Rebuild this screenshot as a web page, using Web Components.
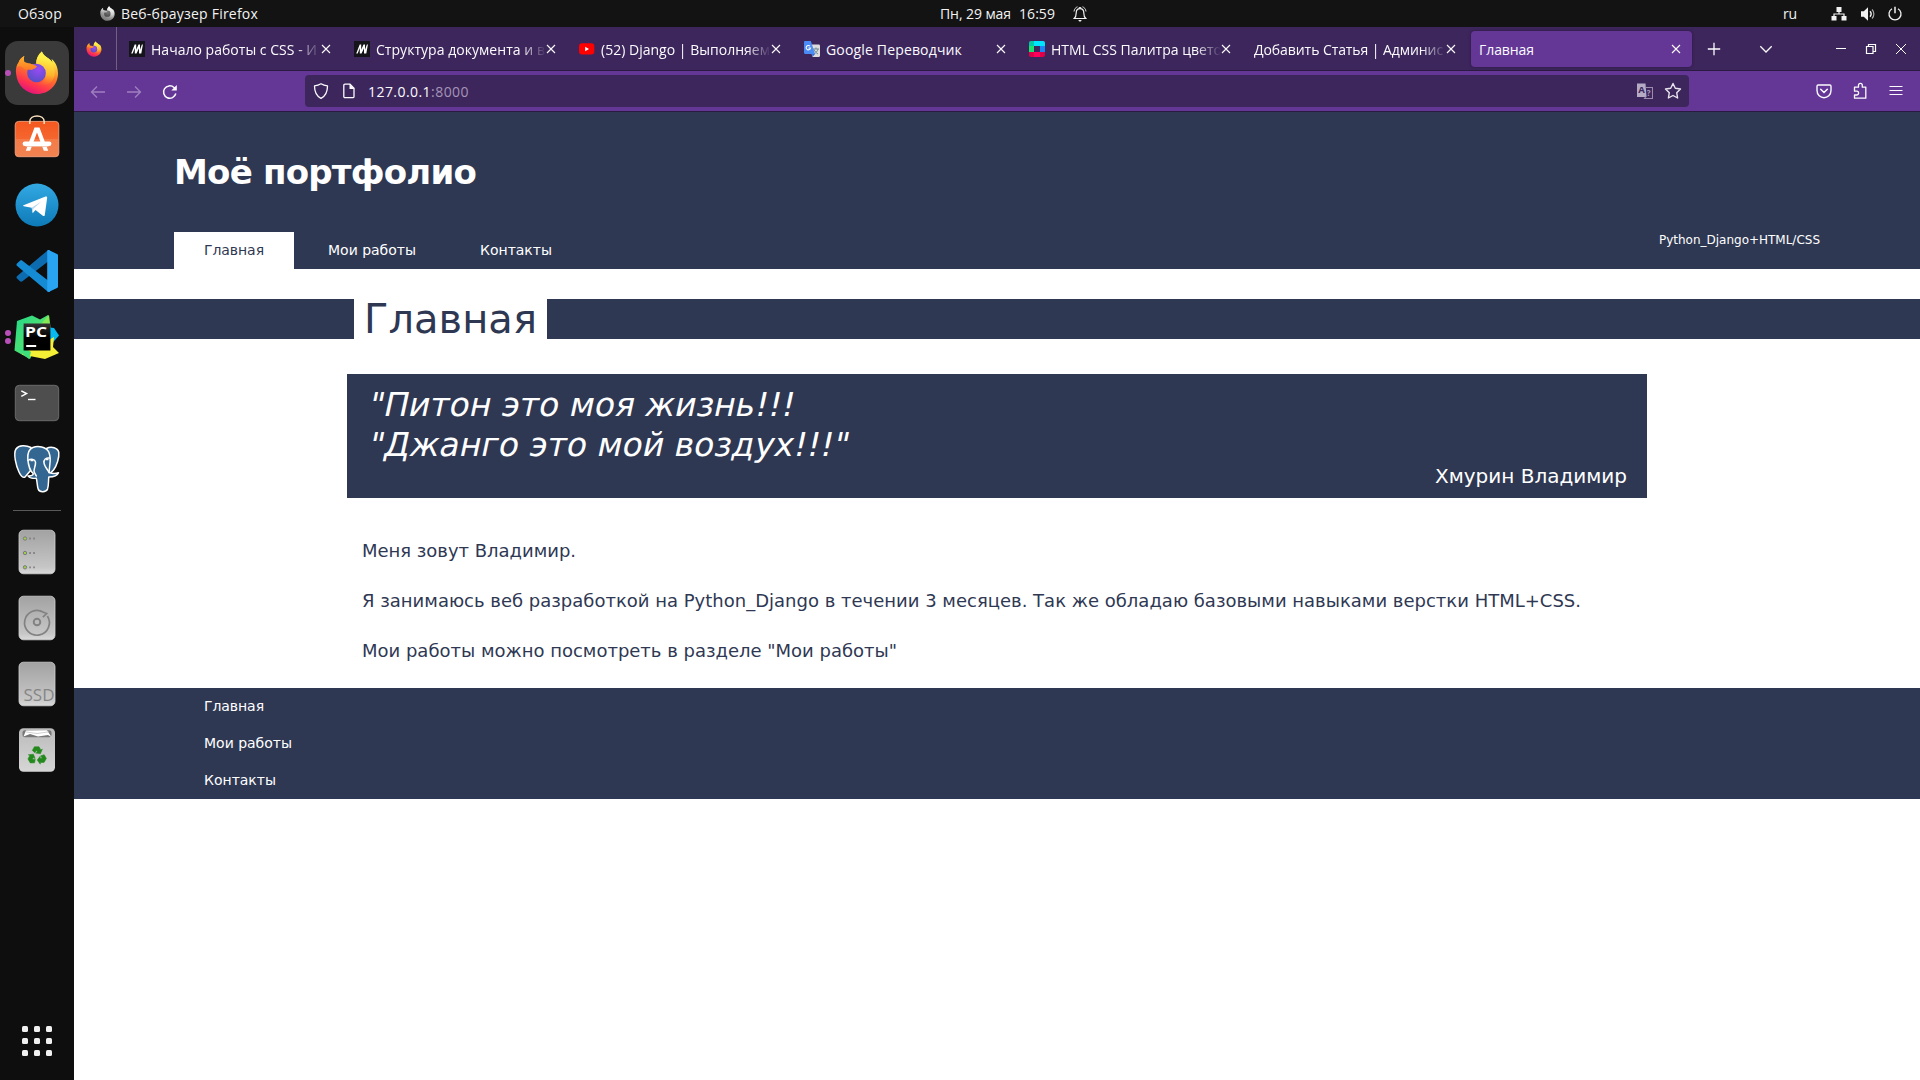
<!DOCTYPE html>
<html lang="ru">
<head>
<meta charset="utf-8">
<title>Главная</title>
<style>
html,body{margin:0;height:100%;background:#fff;overflow:hidden}
</style>
</head>
<body>
<desktop-shell></desktop-shell>

<script>
const define = (name, html, setup) => {
  const t = document.createElement('template');
  t.innerHTML = html;
  customElements.define(name, class extends HTMLElement {
    constructor() {
      super();
      this.attachShadow({mode: 'open'}).append(t.content.cloneNode(true));
    }
    connectedCallback() { if (setup) setup(this, this.shadowRoot); }
  });
};

const FLAME = `
<path d="M41.8 11.5c-4 3.5-5.8 8-5.6 12.3l-8 1-4.200-3c-.5-2-.4-3.800.3-5.800-3 1.300-4.600 3.700-5.600 6.200C15.800 26 15.500 30 16.200 34.500 17.500 46 26.500 54 37.300 54 49 54 58 44.800 58 33.500c0-6.500-2.700-12-6.500-14.500.5 1.500.8 2.500.8 3.500-2-4.500-8.500-5.500-10.500-11z" fill="url(#fa)"/>
<path d="M41.800 11.500c-4 3.500-5.900 8-5.600 12.500 5 1 9.300 5.500 9.300 11 0 5-4 9.500-9.500 9.500 8 4 17-1 18.500-9 .8-5-.2-10-2.200-13-2-4.500-8.500-5.500-10.500-11z" fill="url(#fb)"/>
<circle cx="36.500" cy="33" r="9.300" fill="url(#fc)"/>
<path d="M24.300 16c-3 1.300-4.600 3.700-5.600 6.200-1.200 1.600-1.800 3.300-2.100 5.300 3.400-2.500 5-.5 7.900 1.500 2 1.300 4.500.7 7 .9 2-.7 5-1.500 5.500-3.600-1.500-1.300-5-1.300-6.500-2.800-2 0-4.500-.5-6.200-1.700-.5-2-.5-3.800 0-5.800z" fill="url(#fd)"/>`;
const flameDefs = (c) => `<defs>
<linearGradient id="fa" x1=".8" y1="0" x2=".35" y2="1"><stop offset=".15" stop-color="${c[0]}"/><stop offset=".5" stop-color="${c[1]}"/><stop offset=".8" stop-color="${c[2]}"/><stop offset="1" stop-color="${c[3]}"/></linearGradient>
<linearGradient id="fb" x1=".5" y1="0" x2=".4" y2="1"><stop offset=".2" stop-color="${c[0]}"/><stop offset=".65" stop-color="${c[4]}"/><stop offset="1" stop-color="${c[1]}" stop-opacity="0"/></linearGradient>
<radialGradient id="fc" cx=".6" cy=".3" r=".8"><stop offset="0" stop-color="${c[5]}"/><stop offset="1" stop-color="${c[6]}"/></radialGradient>
<linearGradient id="fd" x1=".3" y1="0" x2=".3" y2="1"><stop offset="0" stop-color="${c[4]}"/><stop offset="1" stop-color="${c[1]}"/></linearGradient></defs>`;
const FLAME_COLOR = flameDefs(['#fff04a','#ff7a26','#ff3350','#e0147d','#ffb52c','#9a4af5','#4f4fc0']) + FLAME;
const FLAME_GREY = flameDefs(['#f4f4f4','#b0b0b0','#8a8a8a','#777','#d0d0d0','#777','#444']) + FLAME;

const DISK = `<defs><linearGradient id="g" x1="0" y1="0" x2="0" y2="1"><stop offset="0" stop-color="#a2a2a2"/><stop offset=".85" stop-color="#c6c6c6"/><stop offset="1" stop-color="#dadada"/></linearGradient></defs><rect x="19" y="11.200" width="36" height="43.600" rx="4.500" fill="url(#g)" stroke="#d0d0d0" stroke-width=".8"/>`;
const RECYCLE = `<path d="m32.300 34.400 2.100-3.700h4.600l1.900 3.200 1.500-.8-2 4.700-4.700-.7 1.700-1-1-1.700-1.500 2.400z"/>`;

const S = (w, h, vb, body) => `<svg width="${w}" height="${h}" viewBox="${vb}" fill="none">${body}</svg>`;
const D = (body) => S(74, 66, '0 0 74 66', body);
const ICONS = {
  'dock-firefox': D(FLAME_COLOR),
  'firefox': S(16, 16, '15 10 44 45', FLAME_COLOR),
  'firefox-grey': S(15, 17, '15 10 44 45', FLAME_GREY),
  'dock-software': D(`<defs><linearGradient id="o" x1="0" y1="0" x2="0" y2="1"><stop offset="0" stop-color="#f4581f"/><stop offset=".5" stop-color="#f5662f"/><stop offset=".51" stop-color="#f47b48"/><stop offset="1" stop-color="#f08352"/></linearGradient></defs>
    <rect x="15.200" y="15.400" width="43.600" height="35.300" rx="3.500" fill="url(#o)" stroke="#f5a37c" stroke-width=".9"/>
    <path d="M29.800 18v-2.200c0-7.700 14.400-7.700 14.400 0V18" stroke="#fbe3c0" stroke-width="1.500"/>
    <path d="M34.500 21.500h5l8.700 23.200h-4.400L37 26.500l-6.800 18.200h-4.400z" fill="#fff"/><path d="M24.800 37.800h24.400" stroke="#fff" stroke-width="4.400" stroke-linecap="round"/><path d="M25.500 40.500h23" stroke="#f3c2aa" stroke-width=".8"/>`),
  'dock-telegram': D(`<defs><linearGradient id="t" x1="0" y1="0" x2="0" y2="1"><stop offset="0" stop-color="#33a9e2"/><stop offset="1" stop-color="#0d7ab8"/></linearGradient></defs><circle cx="37" cy="33" r="21.500" fill="url(#t)"/><path d="M23.500 33.300 45.500 24.600c1.200-.4 1.900.2 1.600 1.700l-2.300 16.600c-.2 1.200-1 1.500-2 .9L35.500 38l-2.800 3.300-1-5.600-7.900-1.400c-.8-.3-.9-.7-.3-1z" fill="#fff"/><path d="m31.700 35.700 10-6.500-8.300 7.600-.7 4.500z" fill="#b8d9ee"/>`),
  'dock-code': D(`<path d="M17 40.600 20 43.300c.8.6 1.600.6 2.400 0L50 22v-9.700c-1.200-.4-2.200-.2-3 .6L17.200 38.100c-.9.800-.9 1.700-.2 2.500z" fill="#0d6bb0"/><path d="M17 25.400 20 22.700c.8-.6 1.600-.6 2.400 0L50 44v9.700c-1.200.4-2.200.2-3-.6L17.200 27.900c-.9-.8-.9-1.700-.2-2.500z" fill="#158bd4"/><path d="M47.200 12.700c.5-.7 1.200-.8 2-.4L57 16c.7.3 1 .8 1 1.500v31c0 .7-.3 1.200-1 1.500l-7.800 3.700c-.8.4-1.500.2-2-.4z" fill="#29a4f2"/>`),
  'dock-pycharm': D(`<defs><linearGradient id="pa" x1="0" y1="0" x2="1" y2="1"><stop offset="0" stop-color="#21d789"/><stop offset="1" stop-color="#7bea5c"/></linearGradient><linearGradient id="pk" x1="0" y1="0" x2="0" y2="1"><stop offset="0" stop-color="#333"/><stop offset=".5" stop-color="#000"/></linearGradient></defs>
    <path d="m46 23 8 1 5 7.500-8 9-9-5z" fill="#07b9ef"/><path d="m32 11.400 8 4 8-4.500 2 11.100-14 20-6 13-15.500-8.500L17 17z" fill="url(#pa)"/><path d="m49 10.800 1.500 13H38z" fill="#87e856"/><path d="m49 36 5-3 -1 10 6 6-14 6L22 50.500l2-5z" fill="#f5ef35"/><path d="m15 44 6-2 10 6-2 7z" fill="#3fe07b"/><rect x="23.600" y="19.500" width="26.800" height="27" fill="url(#pk)"/><rect x="26.200" y="41" width="10" height="2" fill="#fff"/><text x="25" y="33.400" font-family="Open Sans, sans-serif" font-weight="700" font-size="14.500" textLength="22" lengthAdjust="spacingAndGlyphs" fill="#fff">PC</text>`),
  'dock-terminal': D(`<rect x="15.300" y="15.300" width="43.400" height="35.400" rx="4" fill="#4e4e4e" stroke="#6b6b6b"/><path d="m21.300 20.800 5.200 2.800-5.200 2.800" stroke="#fff" stroke-width="1.500"/><path d="M28 29.500h7.500" stroke="#fff" stroke-width="1.400"/>`),
  'dock-postgres': D(`<g stroke="#fff" stroke-width="1.500" stroke-linejoin="round" stroke-linecap="round" fill="#336791"><path d="M46.500 12.500c5-3 11.500-.5 12.300 4 .6 5-2 13-5.300 17.500-1.500 2-3 3-4.500 3z"/><path d="M31 11.500c-5-2.500-12-2.700-15 1.500-3 5 .2 17 3 23 1.500 3.500 3.800 6 6 5l6-7z"/><path d="M27.800 23c-.3-6 1.200-10 5-11.500 5-2 13.200-1 16 4.500 2 5 1.600 9 1 13l-.8 7.500c2 .8 6.500 1.200 9.500.3-1 2.500-4.500 4.200-9.700 4.300-.5 4 0 8.500-1.300 12-1.300 3-7.700 3.700-9.200.3-1.300-3-1-8-2-11.200-3 .5-7-.3-8.300-2.300 3 .2 5.600-.7 5.200-2.500-3-2-5-9-5.400-14.400z"/><path d="M28 24.500c3-2 7-1.500 7.500 1.500.3 4-1.500 6-1.500 9 0 1.500 1.500 3 2.300 5" fill="none"/><path d="M49.500 22c-3.500-.5-6 1.500-5.500 5 .5 3.500 3 6 5.300 9.500" fill="none"/></g><path d="M30.500 24.500h3M46 23.500h2.500" stroke="#fff" stroke-width="1.600"/>`),
  'dock-server': D(DISK + [19.500, 34, 48.300].map(y => `<circle cx="25" cy="${y}" r="1.700" fill="#9bcf4c" stroke="#7c7c7c" stroke-width="1"/><path d="M29.200 ${y}h1.700M33.200 ${y}h1.700" stroke="#828282" stroke-width="1.800"/>`).join('')),
  'dock-disk': D(DISK + `<path d="M46.700 30a12.400 12.400 0 1 1-4.300-3.400l3.300 1-3.400 4" stroke="#828282" stroke-width="1.700" transform="rotate(6 37 37)"/><circle cx="37" cy="37" r="3.300" stroke="#828282" stroke-width="1.900"/>`),
  'dock-ssd': D(DISK + `<text x="23.500" y="49.800" font-family="Open Sans, sans-serif" font-size="15.500" textLength="31" lengthAdjust="spacingAndGlyphs" fill="#858585">SSD</text>`),
  'dock-trash': D(`<defs><linearGradient id="g" x1="0" y1="0" x2="0" y2="1"><stop offset="0" stop-color="#bbb"/><stop offset="1" stop-color="#d6d6d6"/></linearGradient></defs><rect x="19" y="11.200" width="36" height="43.600" rx="4.500" fill="url(#g)"/><rect x="22.500" y="13.200" width="29" height="7" rx="2.500" fill="#777"/><path d="m23.500 19.500 2.500-6 21-.3 4.500 6.700-3.500-1.900-10 1.500-8-2.500z" fill="#fff"/><path d="m26 15 11 1.500 12-1.700" stroke="#bbb" stroke-width=".7"/>
    <g fill="#23891c" stroke="#23891c" stroke-width=".5" transform="translate(0 -1)">${RECYCLE}<g transform="rotate(120 37 40)">${RECYCLE}</g><g transform="rotate(240 37 40)">${RECYCLE}</g></g>`),
  'mdn': S(16, 16, '0 0 16 16', `<path d="M0 0h16v16H0z" fill="#15141a"/><path d="M2.200 12.500 5.700 3.500h1.500v5.300l2.300-5.300H11v5.300l1.900-5.300h1l-1.600 9H10V7.200l-2.500 5.300H5.800V7l-2.100 5.500z" fill="#fff"/>`),
  'youtube': S(16, 16, '0 0 16 16', `<rect y="2.300" width="15.300" height="11.300" rx="3" fill="#f00"/><path d="M6.200 5.800v4.400L10 8z" fill="#fff"/>`),
  'gtranslate': S(16, 16, '0 0 16 16', `<path d="M5 3.500h9.500c.8 0 1.500.5 1.500 1.300v10c0 .7-.5 1.200-1.200 1.200H8.500z" fill="#dcdcdc"/><path d="M9 8h6M12 6.500V8m2 0c-.6 2.300-2 4-4 5m0-4.500c.8 2 2.300 3.500 4 4.500" stroke="#6d8a92" stroke-width="1"/><path d="M1.200 0h5.600L11 13H1.200C.5 13 0 12.500 0 11.800V1.200C0 .5.500 0 1.200 0z" fill="#4b8bf5"/><path d="m8 13 3 0-2.500 3z" fill="#3569d0"/><path d="M6 5.200a2.200 2.200 0 1 0 .5 1.800H4.500" stroke="#fff" stroke-width="1.100"/>`),
  'palette': S(16, 16, '0 0 16 16', `<rect width="16" height="16" rx="2" fill="#e00048"/><path d="M0 5V2a2 2 0 0 1 2-2h3v5z" fill="#00c8a8"/><path d="M5 0h9a2 2 0 0 1 2 2v3H5z" fill="#00e5ff"/><path d="M0 5h5v6H0z" fill="#19e36e"/><path d="M5 5h6v6H5z" fill="#3d265c"/><path d="M11 5h5v6h-5z" fill="#1d84f5"/><path d="M5 11h6v5H5z" fill="#ff005c"/>`),
  'close': S(10, 10, '0 0 10 10', `<path d="m1 1 8 8M9 1 1 9" stroke="#fbfbfe" stroke-width="1.100"/>`),
  'plus': S(14, 14, '0 0 14 14', `<path d="M7 .8v12.400M.8 7h12.400" stroke="#fbfbfe" stroke-width="1.300"/>`),
  'chevron': S(14, 14, '0 0 14 14', `<path d="m1.300 4.300 5.700 5.700 5.700-5.700" stroke="#fbfbfe" stroke-width="1.300"/>`),
  'minimize': S(12, 12, '0 0 12 12', `<path d="M1 5.500h10" stroke="#fff"/>`),
  'restore': S(12, 12, '0 0 12 12', `<path d="M1.500 3.500h6.500v7h-6.500zM3.500 3.500v-2h7v7h-2.500" stroke="#fff" stroke-width="1.200"/>`),
  'wclose': S(12, 12, '0 0 12 12', `<path d="m1 1 10 10M11 1 1 11" stroke="#fff"/>`),
  'back': S(16, 16, '0 0 16 16', `<path d="M15 8H1.500M7 2.500 1.500 8 7 13.500" stroke="#9f80c0" stroke-width="1.300"/>`),
  'forward': S(16, 16, '0 0 16 16', `<path d="M1 8h13.500M9 2.500 14.500 8 9 13.500" stroke="#9f80c0" stroke-width="1.300"/>`),
  'reload': S(16, 16, '0 0 16 16', `<path d="M13.800 9.500A6.200 6.200 0 1 1 12 3.500l1.500 1.500" stroke="#fbfbfe" stroke-width="1.500"/><path d="M14.800 1v5.500H9.300z" fill="#fbfbfe"/>`),
  'shield': S(16, 16, '0 0 16 16', `<path d="M8 .8c2 1.200 4 1.800 6.500 2.100 0 6-1.500 9.800-6.500 12.400C3 12.700 1.500 8.900 1.500 2.900 4 2.600 6 2 8 .8z" stroke="#fbfbfe" stroke-width="1.300" stroke-linejoin="round"/>`),
  'page': S(14, 16, '0 0 14 16', `<path d="M3 1.200h5l4 4V13.500c0 .7-.5 1.200-1.200 1.200H3c-.7 0-1.200-.5-1.200-1.200V2.400c0-.7.5-1.200 1.200-1.200z" stroke="#fbfbfe" stroke-width="1.300"/><path d="M7.500 1v5h5z" fill="#fbfbfe"/>`),
  'translate': S(16, 16, '0 0 16 16', `<path d="M0 .5h8.500l1 13.500H0z" fill="#b6abc4"/><path d="M9 4.500h6.500v11h-8l1.500-2" stroke="#9b8cad" stroke-width="1.100"/><text x="1.300" y="10" font-family="Open Sans" font-size="9.500" font-weight="700" fill="#3d265c">A</text><text x="9.700" y="12.800" font-family="Open Sans" font-size="8" font-weight="700" fill="#a99bba">?</text>`),
  'star': S(18, 18, '0 0 18 18', `<path d="m9 1.500 2.300 4.800 5.200.7-3.800 3.700.9 5.300L9 13.500 4.400 16l.9-5.300L1.500 7l5.200-.7z" stroke="#e8e4ee" stroke-width="1.400" stroke-linejoin="round"/>`),
  'pocket': S(16, 16, '0 0 16 16', `<path d="M2.200 2h11.600c.7 0 1.200.5 1.200 1.200V7.500C15 12 11.500 14.700 8 14.700S1 12 1 7.500V3.200C1 2.500 1.500 2 2.200 2z" stroke="#fbfbfe" stroke-width="1.400"/><path d="m4.700 6.200 3.300 3.300 3.300-3.300" stroke="#fbfbfe" stroke-width="1.500" stroke-linecap="round"/>`),
  'puzzle': S(16, 18, '0 0 16 18', `<path d="M2.500 5.200h4V3.300a1.900 1.900 0 0 1 3.800 0v1.900h3.500v11H2.500V13h2.200a1.900 1.900 0 0 0 0-3.800H2.500z" stroke="#fbfbfe" stroke-width="1.300" stroke-linejoin="round"/>`),
  'menu': S(14, 14, '0 0 14 14', `<path d="M.5 2.500h13M.5 6.500h13M.5 10.500h13" stroke="#fbfbfe" stroke-width="1.200"/>`),
  'bell': S(14, 16, '0 0 14 16', `<path d="M1.200 12.500h11.600c-1.500-1.300-2-2.300-2-5.500 0-2.700-1.400-4.300-3.800-4.300S3.200 4.300 3.200 7c0 3.200-.5 4.200-2 5.500z" stroke="#f2f2f2" stroke-width="1.200"/><path d="M5.500 14h3c0 2-3 2-3 0z" fill="#f2f2f2"/><path d="M1 5.500C1.300 3 2.700 1.300 4.500.8M13 5.500C12.700 3 11.300 1.300 9.500.8M5.800 1.500h2.400" stroke="#ddd" stroke-width="1"/>`),
  'network': S(16, 16, '0 0 16 16', `<path d="M5.500 1h5v5h-5zM.5 10h5v4.500h-5zM10.500 10h5v4.500h-5z" fill="#f2f2f2"/><path d="M8 6v2M3 10V8h10v2" stroke="#f2f2f2" stroke-width="1.200"/>`),
  'volume': S(16, 16, '0 0 16 16', `<path d="M1 5.300h2.800L8 1.200v13.600l-4.200-4.100H1z" fill="#f2f2f2"/><path d="M10 5.300c1.300 1.500 1.300 3.900 0 5.400" stroke="#f2f2f2" stroke-width="1.400"/><path d="M12 3.500c2.500 2.500 2.500 6.500 0 9" stroke="#aaa" stroke-width="1.200"/>`),
  'power': S(16, 16, '0 0 16 16', `<path d="M5 2.700a6 6 0 1 0 6 0" stroke="#f2f2f2" stroke-width="1.300"/><path d="M8 .8v6.500" stroke="#f2f2f2" stroke-width="1.500"/>`),
};

define('ui-icon', `<style>:host{display:flex;flex:none;align-items:center;justify-content:center}svg{display:block;flex:none}</style><slot></slot>`,
  (el, root) => {
    const t = document.createElement('template');
    t.innerHTML = ICONS[el.getAttribute('name')] || '';
    root.append(t.content);
  });

define('gnome-bar', `<style>
:host{display:flex;height:27px;background:#131313;color:#f2f2f2;font:14px/27px "Open Sans",sans-serif;align-items:center;justify-content:space-between;box-sizing:border-box;padding:0 17px 0 18px}
div{display:flex;align-items:center;height:27px;flex:1}
.c{flex:none}.r{justify-content:flex-end}
</style>
<div><fit-text w="44">Обзор</fit-text><ui-icon name="firefox-grey" style="margin:0 6px 0 38px"></ui-icon><fit-text w="137">Веб-браузер Firefox</fit-text></div>
<div class="c" style="padding-left:106px"><fit-text w="71">Пн, 29 мая</fit-text><fit-text w="36" style="margin-left:8px">16:59</fit-text><ui-icon name="bell" style="margin-left:18px"></ui-icon></div>
<div class="r"><fit-text w="14">ru</fit-text><ui-icon name="network" style="margin-left:34px"></ui-icon><ui-icon name="volume" style="margin-left:13px"></ui-icon><ui-icon name="power" style="margin-left:11px"></ui-icon></div>`);

define('dock-item', `<style>
:host{display:grid;height:66px;width:74px;flex:none}
i,ui-icon,b{grid-area:1/1}
i{margin:1px 5px;border-radius:13px}
:host([active]) i{background:#3a3a3a}
b{display:flex;flex-direction:column;gap:2.500px;justify-content:center;padding-left:5px;align-self:center}
u{width:6px;height:6px;border-radius:3px;background:#b84fb8}
</style><i></i><b></b>`, (el, root) => {
  const n = +el.getAttribute('windows') || 0;
  root.querySelector('b').innerHTML = '<u></u>'.repeat(n);
  const icon = document.createElement('ui-icon');
  icon.setAttribute('name', el.getAttribute('icon'));
  root.append(icon);
});

define('app-dock', `<style>
:host{display:flex;flex-direction:column;width:74px;flex:none;background:#0e0e0f;box-sizing:border-box;padding-top:13px}
hr{border:0;height:1px;background:#5a5a5a;margin:8px 13px;width:48px}
.g{margin:auto 22px 24px;display:grid;grid-template-columns:repeat(3,6px);gap:6px}
.g i{width:6px;height:6px;background:#f0f0f0;border-radius:1.500px}
</style>
<dock-item icon="dock-firefox" active windows="1"></dock-item>
<dock-item icon="dock-software"></dock-item>
<dock-item icon="dock-telegram"></dock-item>
<dock-item icon="dock-code"></dock-item>
<dock-item icon="dock-pycharm" windows="2"></dock-item>
<dock-item icon="dock-terminal"></dock-item>
<dock-item icon="dock-postgres"></dock-item>
<hr>
<dock-item icon="dock-server"></dock-item>
<dock-item icon="dock-disk"></dock-item>
<dock-item icon="dock-ssd"></dock-item>
<dock-item icon="dock-trash"></dock-item>
<div class="g"><i></i><i></i><i></i><i></i><i></i><i></i><i></i><i></i><i></i></div>`);

define('browser-tab', `<style>
:host{display:flex;box-sizing:border-box;width:221px;height:36px;border-radius:4px;align-items:center;padding:0 11px 0 8px;color:#fbfbfe;flex:none}
:host([active]){background:#643796;box-shadow:0 0 3px #2a1740}
.i{margin-right:6px}
.t{flex:1;min-width:0;overflow:hidden;white-space:nowrap;line-height:36px;height:36px;padding-top:1px;box-sizing:border-box}
:host([fade]) .t{-webkit-mask:linear-gradient(90deg,#000 calc(100% - 25px),transparent);mask:linear-gradient(90deg,#000 calc(100% - 25px),transparent)}
</style><span class="i"></span><div class="t"><slot></slot></div><ui-icon name="close"></ui-icon>`, (el, root) => {
  const n = el.getAttribute('icon'), s = root.querySelector('.i');
  if (n) s.innerHTML = `<ui-icon name="${n}"></ui-icon>`; else s.remove();
});

define('tab-strip', `<style>
:host{display:flex;height:43px;background:#3d265c;border-bottom:1px solid #2a1a42;font:14px "Open Sans",sans-serif;align-items:center}
.v{width:42px;height:43px;border-right:1px solid #716085;display:flex;align-items:center;justify-content:center;flex:none}
.tabs{display:flex;gap:4px;margin-left:4px;padding-top:1px}
ui-icon{padding-top:1px}
</style>
<div class="v"><ui-icon name="firefox" style="margin-right:2px"></ui-icon></div>
<div class="tabs">
<browser-tab icon="mdn" fade><fit-text w="166">Начало работы с CSS - И</fit-text></browser-tab>
<browser-tab icon="mdn" fade><fit-text w="169">Структура документа и в</fit-text></browser-tab>
<browser-tab icon="youtube" fade><fit-text w="169">(52) Django | Выполняем</fit-text></browser-tab>
<browser-tab icon="gtranslate"><fit-text w="136">Google Переводчик</fit-text></browser-tab>
<browser-tab icon="palette" fade><fit-text w="171">HTML CSS Палитра цвето</fit-text></browser-tab>
<browser-tab fade><fit-text w="189">Добавить Статья | Админис</fit-text></browser-tab>
<browser-tab active><fit-text w="55">Главная</fit-text></browser-tab>
</div>
<ui-icon name="plus" style="margin-left:15px"></ui-icon>
<ui-icon name="chevron" style="margin-left:38px"></ui-icon>
<ui-icon name="minimize" style="margin-left:62px"></ui-icon>
<ui-icon name="restore" style="margin-left:18px"></ui-icon>
<ui-icon name="wclose" style="margin-left:18px"></ui-icon>`);

define('nav-toolbar', `<style>
:host{display:flex;height:40px;background:#643796;border-bottom:1px solid #2a1a42;align-items:center;box-sizing:content-box;padding:0 17px 0 16px}
.n{display:flex;gap:20px;width:215px;flex:none;padding-top:1px}
.u{display:flex;align-items:center;width:1384px;height:32px;border-radius:4px;background:#3d265c;box-sizing:border-box;padding:0 7px 0 8px;font:14px/32px "Open Sans",sans-serif;color:#fbfbfe;flex:none}
.u fit-text{padding-top:1px}
.u span{color:#a595b8}
.e{margin-left:auto;display:flex;gap:11px;align-items:center}
.a{margin-left:auto;display:flex;gap:20px;align-items:center}
</style>
<div class="n"><ui-icon name="back"></ui-icon><ui-icon name="forward"></ui-icon><ui-icon name="reload"></ui-icon></div>
<div class="u"><ui-icon name="shield"></ui-icon><ui-icon name="page" style="margin:0 12px 0 13px"></ui-icon><fit-text w="101">127.0.0.1<span>:8000</span></fit-text><div class="e"><ui-icon name="translate"></ui-icon><ui-icon name="star"></ui-icon></div></div>
<div class="a"><ui-icon name="pocket"></ui-icon><ui-icon name="puzzle"></ui-icon><ui-icon name="menu" style="margin-left:1px"></ui-icon></div>`);

define('nav-link', `<style>
:host{display:block;padding:0 30px;font-size:14px;height:37px;line-height:36px;box-sizing:border-box;color:#fff}
:host([current]){background:#fff;color:#2f3853}
</style><slot></slot>`);

define('site-header', `<style>
:host{display:flex;flex-direction:column;background:#2f3853;height:157px;color:#fff;padding:0 100px;box-sizing:border-box}
h1{margin:0;font-size:34px;line-height:40px;padding-top:40px;flex:1}
.r{display:flex;justify-content:space-between;height:37px}
nav{display:flex;gap:4px}
p{margin:0;font-size:12px;line-height:16px}
</style>
<h1><fit-text w="302">Моё портфолио</fit-text></h1>
<div class="r"><nav><nav-link current><fit-text w="60">Главная</fit-text></nav-link><nav-link><fit-text w="88">Мои работы</fit-text></nav-link><nav-link><fit-text w="72">Контакты</fit-text></nav-link></nav><p><fit-text w="161">Python_Django+HTML/CSS</fit-text></p></div>`);

define('page-title', `<style>
:host{display:flex;height:40px;background:#2f3853;margin-top:30px;padding-left:280px}
h2{margin:0;background:#fff;color:#2f3853;font-size:40px;font-weight:400;line-height:40px;padding:0 10px;height:40px}
</style><h2><slot></slot></h2>`);

// The quote is upright DejaVu Sans slanted about its baseline, quotation marks included.
define('quote-box', `<style>
:host{display:flex;flex-direction:column;box-sizing:border-box;width:1300px;height:124px;margin:35px 0 0 273px;background:#2f3853;color:#fff;padding:11px 20px 0 20px;font-size:33px;line-height:40px}
.q{display:flex;flex-direction:column;align-items:flex-start}
.q ::slotted(*){transform:skewX(-12deg);transform-origin:0 31px}
.a{font-size:20px;line-height:22px;align-self:flex-end}
</style><div class="q"><slot></slot></div><div class="a"><slot name="author"></slot></div>`);

define('site-article', `<style>
:host{display:flex;flex-direction:column;height:190px;box-sizing:border-box;padding:28px 0 0 288px;color:#2f3853;font-size:18px;line-height:50px}
p{margin:0}
</style>
<p><fit-text w="214">Меня зовут Владимир.</fit-text></p>
<p><fit-text w="1219">Я занимаюсь веб разработкой на Python_Django в течении 3 месяцев. Так же обладаю базовыми навыками верстки HTML+CSS.</fit-text></p>
<p><fit-text w="535">Мои работы можно посмотреть в разделе "Мои работы"</fit-text></p>`);

define('site-footer', `<style>:host{display:flex;flex-direction:column;background:#2f3853;padding-left:100px}</style>
<nav-link><fit-text w="60">Главная</fit-text></nav-link><nav-link><fit-text w="88">Мои работы</fit-text></nav-link><nav-link><fit-text w="72">Контакты</fit-text></nav-link>`);

define('portfolio-page', `<style>:host{display:block;flex:1;background:#fff;font-family:"DejaVu Sans",sans-serif}</style>
<site-header></site-header>
<page-title><fit-text w="173">Главная</fit-text></page-title>
<quote-box><fit-text w="426">"Питон это моя жизнь!!!</fit-text><fit-text w="480">"Джанго это мой воздух!!!"</fit-text><fit-text slot="author" w="192">Хмурин Владимир</fit-text></quote-box>
<site-article></site-article>
<site-footer></site-footer>`);

define('desktop-shell', `<style>
:host{display:flex;flex-direction:column;width:1920px;height:1080px;overflow:hidden}
.m{display:flex;flex:1;min-height:0}
.w{display:flex;flex-direction:column;flex:1;min-width:0}
</style>
<gnome-bar></gnome-bar>
<div class="m"><app-dock></app-dock><div class="w"><tab-strip></tab-strip><nav-toolbar></nav-toolbar><portfolio-page></portfolio-page></div></div>`);

// Inline text run whose tracking is adjusted so that it occupies the width in `w`.
define('fit-text', `<style>:host{display:inline-block;white-space:pre}</style><slot></slot>`, (el) => {
  const w = +el.getAttribute('w');
  el.style.letterSpacing = '0';
  const natural = parseFloat(getComputedStyle(el).width);
  if (w && natural) el.style.letterSpacing = ((w - natural) / el.textContent.length).toFixed(3) + 'px';
});
</script>
</body>
</html>
